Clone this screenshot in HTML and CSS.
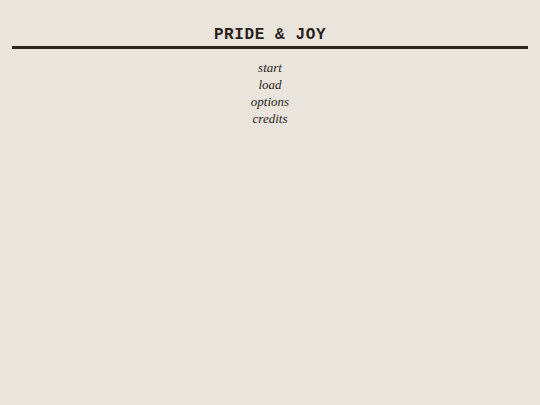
FILE: index.html
```html
<!DOCTYPE html>
<html>
<head>
<meta charset="utf-8">
<link rel="stylesheet" href="styles.css">
</head>
<body>
<header class="header">
  <h1 class="title">PRIDE &amp; JOY</h1>
</header>
<nav class="menu">
  <a class="menu-item">start</a>
  <a class="menu-item">load</a>
  <a class="menu-item">options</a>
  <a class="menu-item">credits</a>
</nav>
</body>
</html>
```
FILE: styles.css
```css
html, body {
  margin: 0;
  padding: 0;
  background: #e9e4dc;
  height: 100%;
}
body {
  padding: 0 12px;
}
.header {
  border-bottom: 3px solid #2f2520;
  padding-top: 27px;
  padding-bottom: 2px;
  text-align: center;
}
.title {
  margin: 0;
  font-family: "Liberation Mono", monospace;
  font-weight: bold;
  font-size: 16px;
  letter-spacing: 0.6px;
  line-height: 17px;
  color: #2a1f1a;
}
.menu {
  display: flex;
  flex-direction: column;
  align-items: center;
  padding-top: 10px;
}
.menu-item {
  font-family: "Liberation Serif", serif;
  font-style: italic;
  font-size: 13px;
  line-height: 17px;
  color: #2a1f1a;
}
```
